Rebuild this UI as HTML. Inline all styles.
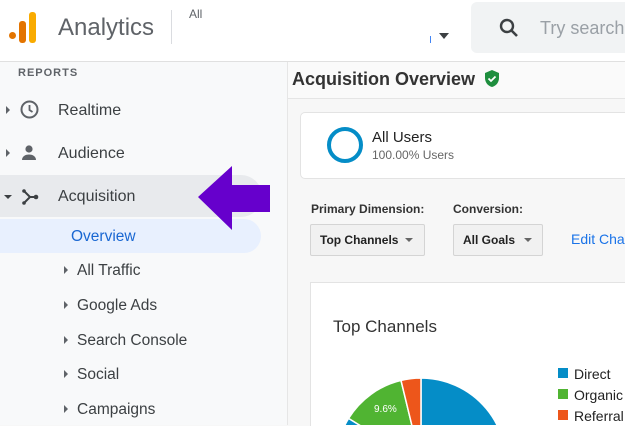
<!DOCTYPE html><html><head><style>
body{margin:0;width:625px;height:425px;overflow:hidden;font-family:"Liberation Sans",sans-serif;background:#f7f7f7;position:relative}
.a{position:absolute}
.nav{color:#3c4043;font-size:16px}
.sub{color:#3c4043;font-size:15.5px}
.tri{position:absolute;width:0;height:0;border-top:4px solid transparent;border-bottom:4px solid transparent;border-left:4px solid #5f6368}
</style></head><body>
<div class="a" style="left:0;top:0;width:625px;height:61px;background:#fff;border-bottom:1px solid #e0e0e0"></div>
<div class="a" style="left:9px;top:32px;width:7px;height:7px;border-radius:50%;background:#e37400"></div>
<div class="a" style="left:19px;top:21px;width:7px;height:22px;border-radius:3px;background:#e37400"></div>
<div class="a" style="left:29px;top:12px;width:7px;height:31px;border-radius:3px;background:#f9ab00"></div>
<div class="a" style="left:58px;top:14px;font-size:24px;color:#5f6368">Analytics</div>
<div class="a" style="left:171px;top:10px;width:1px;height:34px;background:#dadce0"></div>
<div class="a" style="left:189px;top:7px;font-size:12px;color:#5f6368">All</div>
<div class="a" style="left:430px;top:36px;width:1px;height:7px;background:#4285f4"></div>
<div class="a" style="left:439px;top:33px;border-left:5px solid transparent;border-right:5px solid transparent;border-top:6px solid #3c4043"></div>
<div class="a" style="left:471px;top:2px;width:160px;height:51px;border-radius:6px;background:#f1f3f4"></div>
<svg class="a" style="left:498px;top:17px" width="22" height="22" viewBox="0 0 22 22"><circle cx="9" cy="9" r="6" fill="none" stroke="#3c4043" stroke-width="2.4"/><path d="M13.5 13.5L19 19" stroke="#3c4043" stroke-width="2.6"/></svg>
<div class="a" style="left:540px;top:18px;font-size:18px;color:#9aa0a6">Try search</div>
<div class="a" style="left:0;top:62px;width:287px;height:363px;background:#f8f9fa;border-right:1px solid #e6e6e6"></div>
<div class="a" style="left:18px;top:67px;font-size:11px;color:#5f6368;letter-spacing:1px;font-weight:bold">REPORTS</div>
<div class="tri" style="left:6px;top:106px"></div>
<svg class="a" style="left:19px;top:99px" width="21" height="21" viewBox="0 0 21 21"><circle cx="10.5" cy="10.5" r="8" fill="none" stroke="#5f6368" stroke-width="2"/><path d="M10.5 6v5l3 2" fill="none" stroke="#5f6368" stroke-width="1.8"/></svg>
<div class="a nav" style="left:58px;top:102px">Realtime</div>
<div class="tri" style="left:6px;top:149px"></div>
<svg class="a" style="left:20px;top:144px" width="18" height="18" viewBox="0 0 18 18"><circle cx="9" cy="5" r="3.6" fill="#5f6368"/><path d="M2 16c0-4 4-5.5 7-5.5s7 1.5 7 5.5z" fill="#5f6368"/></svg>
<div class="a nav" style="left:58px;top:145px">Audience</div>
<div class="a" style="left:0;top:175px;width:262px;height:42px;background:#e8eaed;border-radius:0 21px 21px 0"></div>
<div class="a" style="left:4px;top:195px;border-left:4px solid transparent;border-right:4px solid transparent;border-top:4px solid #3c4043"></div>
<svg class="a" style="left:20px;top:187px" width="20" height="20" viewBox="0 0 20 20"><path d="M4 4l6 6M4 16l6-6h6" stroke="#3c4043" stroke-width="2" fill="none"/><circle cx="4" cy="4" r="1.8" fill="#3c4043"/><circle cx="4" cy="16" r="1.8" fill="#3c4043"/><circle cx="16" cy="10" r="2.3" fill="#3c4043"/></svg>
<div class="a nav" style="left:58px;top:188px">Acquisition</div>
<div class="a" style="left:0;top:219px;width:261px;height:34px;background:#e8f0fe;border-radius:0 17px 17px 0"></div>
<div class="a" style="left:71px;top:228px;font-size:15.5px;color:#1967d2">Overview</div>
<div class="tri" style="left:64px;top:266px"></div><div class="a sub" style="left:77px;top:262px">All Traffic</div>
<div class="tri" style="left:64px;top:301px"></div><div class="a sub" style="left:77px;top:297px">Google Ads</div>
<div class="tri" style="left:64px;top:336px"></div><div class="a sub" style="left:77px;top:332px">Search Console</div>
<div class="tri" style="left:64px;top:370px"></div><div class="a sub" style="left:77px;top:366px">Social</div>
<div class="tri" style="left:64px;top:405px"></div><div class="a sub" style="left:77px;top:401px">Campaigns</div>
<svg class="a" style="left:196px;top:166px" width="76" height="66"><polygon points="2,31 36,0 36,19 74,19 74,46 36,46 36,64" fill="#6600cc"/></svg>
<div class="a" style="left:288px;top:62px;width:337px;height:36px;background:#fafafa;border-bottom:1px solid #e5e5e5"></div>
<div class="a" style="left:292px;top:69px;font-size:18px;font-weight:bold;color:#333">Acquisition Overview</div>
<svg class="a" style="left:484px;top:69px" width="16" height="19" viewBox="0 0 16 19"><path d="M8 1L1 4v5c0 4.5 3 8 7 9 4-1 7-4.5 7-9V4z" fill="#1e8e3e"/><path d="M4.5 9.5l2.5 2.5 4.5-4.5" stroke="#fff" stroke-width="1.8" fill="none"/></svg>
<div class="a" style="left:300px;top:112px;width:330px;height:65px;background:#fff;border:1px solid #e3e3e3;border-radius:5px"></div>
<div class="a" style="left:327px;top:127px;width:28px;height:28px;border-radius:50%;border:4px solid #058dc7"></div>
<div class="a" style="left:372px;top:129px;font-size:15px;color:#222">All Users</div>
<div class="a" style="left:372px;top:148px;font-size:12px;color:#666">100.00% Users</div>
<div class="a" style="left:311px;top:202px;font-size:12px;color:#333;font-weight:bold">Primary Dimension:</div>
<div class="a" style="left:453px;top:202px;font-size:12px;color:#333;font-weight:bold">Conversion:</div>
<div class="a" style="left:310px;top:224px;width:113px;height:30px;background:#f1f1f1;border:1px solid #d4d4d4;border-radius:2px"></div>
<div class="a" style="left:320px;top:233px;font-size:12px;font-weight:bold;color:#222">Top Channels</div>
<div class="a" style="left:405px;top:238px;border-left:4px solid transparent;border-right:4px solid transparent;border-top:4px solid #666"></div>
<div class="a" style="left:453px;top:224px;width:88px;height:30px;background:#f1f1f1;border:1px solid #d4d4d4;border-radius:2px"></div>
<div class="a" style="left:463px;top:233px;font-size:12px;font-weight:bold;color:#222">All Goals</div>
<div class="a" style="left:524px;top:238px;border-left:4px solid transparent;border-right:4px solid transparent;border-top:4px solid #666"></div>
<div class="a" style="left:571px;top:231px;font-size:14px;color:#1a73e8;white-space:nowrap">Edit Chan</div>
<div class="a" style="left:310px;top:282px;width:320px;height:143px;background:#fff;border-left:1px solid #e3e3e3;border-top:1px solid #e3e3e3"></div>
<div class="a" style="left:333px;top:317px;font-size:17px;color:#333">Top Channels</div>
<svg class="a" style="left:330px;top:370px" width="180" height="55" viewBox="0 0 180 55">
<g transform="translate(91,93)">
<path d="M0 0L0 -85A85 85 0 1 1 -72.4 -44.6Z" fill="#058dc7" stroke="#fff" stroke-width="1.5"/>
<path d="M0 0L-72.4 -44.6A85 85 0 0 1 -20 -82.6Z" fill="#50b432" stroke="#fff" stroke-width="1.5"/>
<path d="M0 0L-20 -82.6A85 85 0 0 1 0 -85Z" fill="#ed561b" stroke="#fff" stroke-width="1.5"/>
</g>
<text x="44" y="42" font-size="10" fill="#fff" font-family="Liberation Sans">9.6%</text>
</svg>
<div class="a" style="left:558px;top:368px;width:10px;height:10px;background:#058dc7"></div>
<div class="a" style="left:574px;top:366px;font-size:14px;color:#222">Direct</div>
<div class="a" style="left:558px;top:389px;width:10px;height:10px;background:#50b432"></div>
<div class="a" style="left:574px;top:387px;font-size:14px;color:#222">Organic</div>
<div class="a" style="left:558px;top:410px;width:10px;height:10px;background:#ed561b"></div>
<div class="a" style="left:574px;top:408px;font-size:14px;color:#222">Referral</div>
</body></html>
